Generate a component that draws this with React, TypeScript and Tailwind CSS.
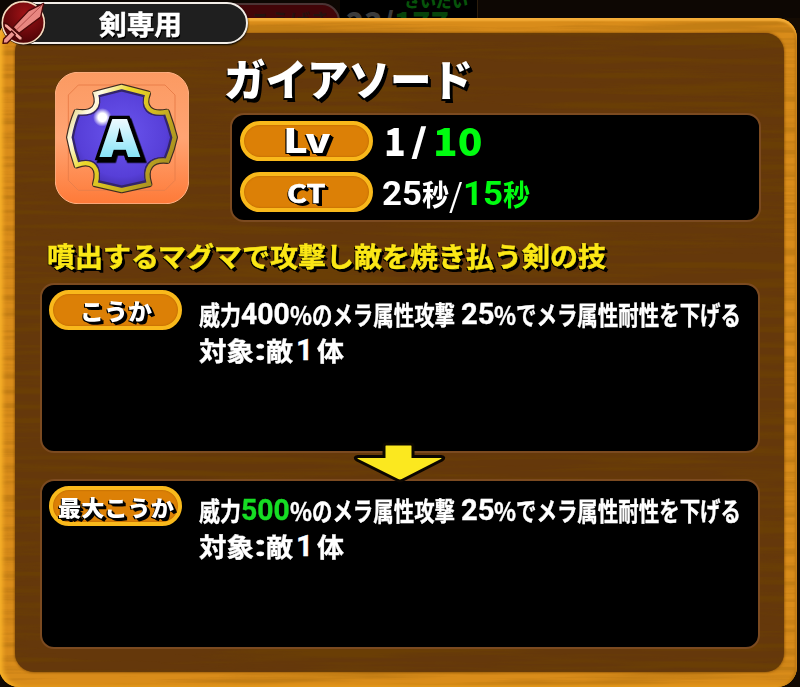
import { useLayoutEffect, useRef, type ReactNode } from 'react';

interface FitProps {
  width: number;
  className?: string;
  children: ReactNode;
}

// Squeezes or stretches a run of text to an exact width
const Fit = ({ width, className = '', children }: FitProps) => {
  const ref = useRef<HTMLSpanElement>(null);

  useLayoutEffect(() => {
    const el = ref.current;
    if (!el) return;
    el.style.transform = `scaleX(${width / el.offsetWidth})`;
  }, [width]);

  return (
    <span className="inline-flex shrink-0" style={{ width }}>
      <span ref={ref} className={`inline-block shrink-0 origin-left whitespace-nowrap ${className}`}>
        {children}
      </span>
    </span>
  );
};

const Badge = ({ children }: { children: ReactNode }) => (
  <div className="flex h-10 w-[133px] shrink-0 items-center justify-center rounded-full border-4 border-[#f9b91b] bg-[#dc8006] text-white shadow-[inset_0_0_2px_#a85c00] [text-shadow:1px_1px_0_#000,2px_2px_0_#000,3px_3px_0_#000,-1px_1px_0_#000]">
    {children}
  </div>
);

const WoodGrain = ({ id, opacity }: { id: string; opacity: string }) => (
  <svg className={`pointer-events-none absolute inset-0 h-full w-full ${opacity}`}>
    <filter id={id} x="0" y="0" width="100%" height="100%">
      <feTurbulence type="fractalNoise" baseFrequency="0.005 0.13" numOctaves="4" seed="11" />
      <feColorMatrix values="0 0 0 0 0.16  0 0 0 0 0.06  0 0 0 0 0  3.4 0 0 0 -1.4" />
    </filter>
    <rect width="100%" height="100%" filter={`url(#${id})`} />
  </svg>
);

const EMBLEM =
  'M245 82 L323 102 C308 140 328 166 380 157 Q394 195 404 233 Q396 270 382 303 C334 298 312 324 327 373 L245 391 L166 373 C180 328 160 298 110 316 Q96 275 88 233 Q96 190 110 157 C160 164 180 140 167 102 Z';

const SkillIcon = () => (
  <svg viewBox="45 37 402 396" className="h-[132px] w-[134px] shrink-0">
    <defs>
      <linearGradient id="tile" x1="0" y1="0" x2="0" y2="1">
        <stop offset="0" stopColor="#fb9a62" />
        <stop offset="0.5" stopColor="#ffa473" />
        <stop offset="1" stopColor="#fe7a38" />
      </linearGradient>
      <radialGradient id="gem" cx="0.5" cy="0.45" r="0.6">
        <stop offset="0" stopColor="#6a55ee" />
        <stop offset="0.7" stopColor="#573fd8" />
        <stop offset="1" stopColor="#3a279c" />
      </radialGradient>
      <linearGradient id="rim" x1="0" y1="0.1" x2="1" y2="0.7">
        <stop offset="0" stopColor="#d8c45a" />
        <stop offset="0.2" stopColor="#fffbe8" />
        <stop offset="0.38" stopColor="#ecd92c" />
        <stop offset="0.6" stopColor="#d8c020" />
        <stop offset="1" stopColor="#a48c20" />
      </linearGradient>
      <linearGradient id="letter" x1="0" y1="0" x2="0" y2="1">
        <stop offset="0.2" stopColor="#ecfaff" />
        <stop offset="1" stopColor="#62dcf4" />
      </linearGradient>
      <radialGradient id="shine">
        <stop offset="0.45" stopColor="#fff" />
        <stop offset="1" stopColor="#fff" stopOpacity="0" />
      </radialGradient>
    </defs>
    <rect x="46" y="38" width="400" height="394" rx="68" fill="url(#tile)" stroke="#ffb184" strokeWidth="3" />
    <path d="M115 76 H375 L405 106 V362 L375 392 H115 L85 362 V106 Z" fill="none" stroke="#ea7f4a" strokeWidth="3" />
    <path d={EMBLEM} fill="url(#gem)" stroke="#3f2c22" strokeWidth="20" strokeLinejoin="round" />
    <path
      d={EMBLEM}
      fill="none"
      transform="translate(245 236) scale(.95) translate(-245 -236)"
      stroke="#33246a"
      strokeWidth="12"
    />
    <path d={EMBLEM} fill="none" stroke="url(#rim)" strokeWidth="13" />
    <circle cx="187" cy="173" r="28" fill="url(#shine)" />
    <text
      x="240"
      y="293"
      textAnchor="middle"
      textLength="130"
      lengthAdjust="spacingAndGlyphs"
      className="font-['Inter'] text-[156px] font-black drop-shadow-[5px_8px_0_#000] [paint-order:stroke]"
      fill="url(#letter)"
      stroke="#000"
      strokeWidth="20"
    >
      A
    </text>
  </svg>
);

const SwordIcon = () => (
  <svg viewBox="0 0 141 135" className="absolute top-0 left-0 h-[45px] w-[47px]">
    <defs>
      <radialGradient id="medal" cx="0.55" cy="0.3" r="0.65">
        <stop offset="0" stopColor="#a01216" />
        <stop offset="1" stopColor="#520407" />
      </radialGradient>
    </defs>
    <circle cx="70" cy="68" r="67" fill="#1a0b06" />
    <circle cx="70" cy="68" r="63" fill="url(#medal)" stroke="#f4dcc0" strokeWidth="5" />
    <g stroke="#4a0808" strokeWidth="4" strokeLinejoin="round">
      <path d="M131 10 L122 51 L57 100 L39 82 L86 32 Z" fill="#e88680" />
      <path d="M12 69 L22 72 L67 112 L66 121 L57 120 L13 80 Z" fill="#f8a49c" />
      <path d="M35 93 L46 104 L22 129 L9 130 L11 117 Z" fill="#ee9690" />
    </g>
    <path d="M129 12 L48 91" stroke="#b24c4a" strokeWidth="3" />
  </svg>
);

const PANEL = 'border-2 border-[#7b4a20] bg-black rounded-[14px]';

const EffectPanel = ({ label, power }: { label: ReactNode; power: ReactNode }) => (
  <div className={`flex h-[170px] w-[720px] gap-[17px] pt-[5px] pl-[7px] ${PANEL}`}>
    <Badge>{label}</Badge>
    <div className="flex flex-col text-[26px] leading-9 font-bold text-white [-webkit-text-stroke:0.4px_currentColor]">
      <div className="flex h-9 pt-1.5">
        <Fit width={42}>威力</Fit>
        {power}
        <Fit width={22}>%</Fit>
        <span className="mr-1.5 flex">
          <Fit width={143}>のメラ属性攻撃</Fit>
        </span>
        <Fit width={33} className="font-['Roboto'] text-[30px]">25</Fit>
        <Fit width={22}>%</Fit>
        <Fit width={225}>でメラ属性耐性を下げる</Fit>
      </div>
      <div className="flex h-9 pt-1.5">
        <Fit width={55}>対象</Fit>
        <Fit width={12} className="font-['Roboto'] text-[30px]">:</Fit>
        <span className="mr-[3px] flex">
          <Fit width={27}>敵</Fit>
        </span>
        <span className="mr-[4px] flex">
          <Fit width={17} className="font-['Roboto'] text-[30px]">1</Fit>
        </span>
        <Fit width={27}>体</Fit>
      </div>
    </div>
  </div>
);

export default function App() {
  return (
    <div className="relative flex h-[687px] w-[800px] flex-col overflow-hidden bg-[#140b03] font-['Noto_Sans_CJK_JP',sans-serif]">
      {/* Dimmed screen behind the dialog */}
      <div className="flex h-[18px] shrink-0 overflow-hidden bg-[#0d0703] pl-[200px]">
        <div className="mt-[3px] h-10 w-[140px] shrink-0 rounded-tr-[18px] border-2 border-[#4b3434] bg-[#420508] pl-[48px] text-[20px] leading-[32px] font-bold text-[#26120f]">
          こうげき
        </div>
        <div className="relative h-[18px] w-[138px] shrink-0 border-r border-[#2b1d0c] bg-black pl-[6px] text-[30px] leading-[42px] font-black">
          <span className="text-[#3b3b3b]">23/</span>
          <span className="text-[#06430a]">177</span>
          <span className="absolute -top-[12px] left-[64px] text-[16px] leading-[24px] text-[#06530a]">さいだい</span>
        </div>
      </div>

      {/* Wooden frame */}
      <div className="relative -ml-px h-[669px] w-[798px] shrink-0 overflow-hidden rounded-[20px] bg-[#d98c1a] pt-[15px] pl-4">
        <WoodGrain id="frame-grain" opacity="opacity-20" />
        <div className="pointer-events-none absolute inset-0 rounded-[20px] shadow-[inset_0_3px_2px_#f5ad38,inset_4px_0_4px_#f7b028,inset_-2px_0_2px_#b87414,inset_0_-2px_3px_#d88c12]" />
        <div className="relative flex h-[639px] w-[769px] flex-col overflow-hidden rounded-[19px] bg-[#65380b] shadow-[0_0_3px_#6a3b05]">
          <WoodGrain id="panel-grain" opacity="opacity-50" />

          <div className="relative flex h-[189px] gap-[36px] pt-[39px] pl-10">
            <SkillIcon />
            <div className="flex flex-col">
              <h1 className="-mt-[21px] -ml-[1px] h-[62px] text-[43px] leading-[52px] font-black text-white [text-shadow:1px_1px_0_#000,2px_2px_0_#000,3px_4px_0_#000,-1px_2px_0_#000]">
                <Fit width={249}>ガイアソード</Fit>
              </h1>
              <div className={`ml-[5px] flex h-[109px] w-[531px] flex-col gap-[11px] pt-[6px] pl-[8px] ${PANEL}`}>
                <div className="flex h-10 items-center">
                  <Badge>
                    <Fit width={48} className="-mt-1 text-[34px] leading-8 font-black">Lv</Fit>
                  </Badge>
                  <div className="-mt-[5px] ml-[11px] flex items-center gap-[5px] text-[39px] leading-10 font-black text-white">
                    <Fit width={22}>1</Fit>
                    <Fit width={17} className="text-[33px]">/</Fit>
                    <Fit width={50} className="text-[#00fc10]">10</Fit>
                  </div>
                </div>
                <div className="flex h-10 items-center">
                  <Badge>
                    <Fit width={39} className="text-[25px] leading-8 font-bold [-webkit-text-stroke:0.6px_#fff]">CT</Fit>
                  </Badge>
                  <div className="mt-0.5 ml-[9px] flex items-center text-[29px] leading-10 font-bold text-white">
                    <Fit width={40} className="font-['Roboto'] text-[34px]">25</Fit>
                    <Fit width={27}>秒</Fit>
                    <Fit width={14} className="text-[32px] font-normal">/</Fit>
                    <Fit width={40} className="font-['Roboto'] text-[34px] text-[#00fc10]">15</Fit>
                    <Fit width={27} className="text-[#00fc10]">秒</Fit>
                  </div>
                </div>
              </div>
            </div>
          </div>

          <div className="relative flex h-[61px] items-center pt-[8px] pl-[32px] text-[27px] font-bold text-[#fbe716] [-webkit-text-stroke:0.5px_#fbe716] [text-shadow:1px_1px_0_#000,2px_2px_0_#000,3px_3px_0_#000,-1px_1px_0_#000]">
            <Fit width={559}>噴出するマグマで攻撃し敵を焼き払う剣の技</Fit>
          </div>

          <div className="relative flex flex-col gap-[26px] pl-[25px]">
            <EffectPanel
              label={<Fit width={72} className="text-[23px] leading-8 font-black">こうか</Fit>}
              power={<Fit width={49} className="font-['Roboto'] text-[30px]">400</Fit>}
            />
            <svg viewBox="0 0 96 42" className="absolute top-[159px] left-[337px] h-[42px] w-24">
              <path
                d="M34 2 H59 Q61 2 61 4 V14.5 H89 Q94 15 90 18 L51 38 Q48 40 45 38 L5 18 Q1 15 6 14.5 H32 V4 Q32 2 34 2 Z"
                fill="#fbe81f"
                stroke="#0b0600"
                strokeWidth="3"
              />
            </svg>
            <EffectPanel
              label={<Fit width={116} className="text-[22px] leading-8 font-black">最大こうか</Fit>}
              power={<Fit width={49} className="font-['Roboto'] text-[30px] text-[#16dd24]">500</Fit>}
            />
          </div>
        </div>
      </div>

      {/* Weapon restriction tag */}
      <div className="absolute top-[2px] left-5 flex h-[42px] w-[228px] items-center rounded-r-full border-2 border-[#f3eee8] bg-[#1f1f1f] pt-0.5 pl-[77px] text-[27px] leading-10 font-bold text-white shadow-[0_1px_2px_#000] [-webkit-text-stroke:0.5px_#fff] [text-shadow:1px_2px_0_#000]">
        <Fit width={83}>剣専用</Fit>
      </div>
      <SwordIcon />
    </div>
  );
}
